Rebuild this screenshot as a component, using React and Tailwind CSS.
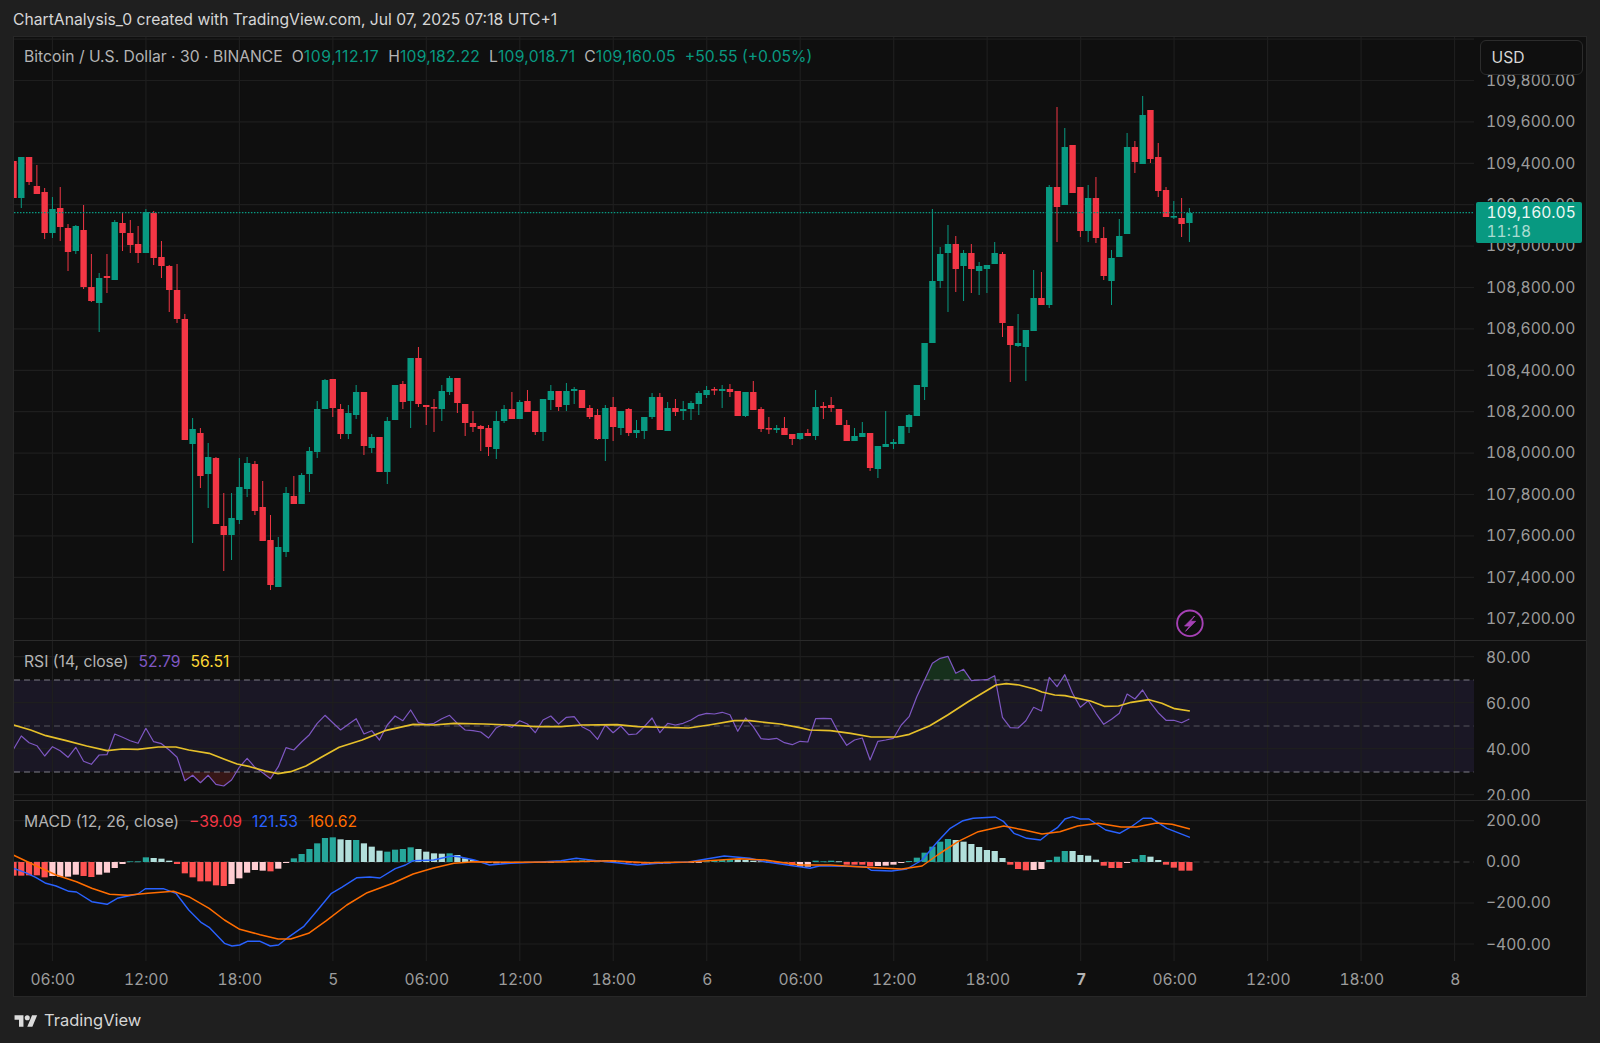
const UP = "#089981";
const DOWN = "#f23645";
const X = (i) => 13.5 + 7.79 * i;

// [up?, bodyTop, bodyBottom, wickTop, wickBottom]
const CANDLES = [
  [0,161,198,161,211],[1,157,198,157,208],[0,157,182,157,185],[0,186,194,165,194],[0,192,233,188,239],
  [1,209,233,197,238],[0,208,227,187,241],[0,228,252,224,271],[1,226,251,225,254],[0,230,287,205,289],
  [0,287,301,254,302],[1,278,303,273,332],[0,276,278,254,293],[1,222,280,220,280],[0,223,233,213,251],
  [0,233,245,220,253],[0,244,253,226,263],[1,212,253,209,253],[0,213,258,211,265],[0,257,266,241,278],
  [0,266,290,265,312],[0,290,319,264,323],[0,319,440,314,440],[1,429,444,418,543],[0,433,476,428,488],
  [1,457,474,443,508],[0,458,524,457,524],[0,526,535,493,571],[1,518,535,493,560],[1,487,520,458,524],
  [1,463,489,457,497],[0,464,511,461,515],[0,507,541,481,541],[0,540,585,515,590],[1,547,587,537,587],
  [1,493,552,487,557],[0,496,504,476,504],[1,475,504,473,504],[1,451,474,447,492],[1,409,452,401,458],
  [1,380,409,379,409],[0,379,408,379,417],[0,409,434,404,439],[1,413,434,405,439],[1,392,415,385,419],
  [0,392,446,392,455],[1,437,448,434,453],[0,437,472,437,472],[1,421,472,417,484],[1,385,420,385,420],
  [0,384,402,381,409],[1,358,401,358,428],[0,358,404,347,407],[0,405,407,405,425],[0,407,408,399,432],
  [1,391,409,385,421],[1,378,392,376,395],[0,378,403,378,413],[0,404,423,404,436],[0,423,427,411,432],
  [0,426,429,425,451],[0,428,447,425,456],[1,421,449,411,459],[1,409,421,405,423],[0,409,419,392,419],
  [1,402,419,400,419],[0,401,412,390,412],[0,411,432,411,435],[1,399,432,399,441],[1,391,400,385,410],
  [0,391,407,391,411],[1,391,405,383,411],[1,389,391,387,404],[0,390,408,390,408],[0,408,417,405,419],
  [0,415,439,409,440],[1,408,439,405,461],[0,407,427,397,441],[1,411,428,411,435],[0,409,433,408,436],
  [1,430,433,420,438],[1,417,431,417,439],[1,397,417,393,419],[0,397,430,393,430],[1,408,431,402,431],
  [0,408,412,399,416],[1,409,411,401,420],[1,403,409,401,420],[1,393,404,391,415],[1,390,395,386,398],
  [0,389,390,387,395],[1,389,391,385,408],[0,389,392,384,397],[0,391,416,391,416],[1,392,416,392,417],
  [0,392,410,381,410],[0,409,429,407,432],[0,428,429,417,434],[1,428,430,425,433],[0,428,435,417,435],
  [0,434,439,434,445],[1,433,439,433,440],[0,433,436,429,436],[1,407,436,390,440],[0,406,408,402,419],
  [0,405,408,397,412],[0,409,425,409,425],[0,425,441,420,441],[1,436,441,428,441],[1,433,437,422,437],
  [0,433,468,433,471],[1,446,469,446,478],[1,444,447,411,447],[1,442,444,439,449],[1,426,444,426,444],
  [1,415,427,414,433],[1,385,416,385,416],[1,343,387,343,400],[1,281,343,209,343],[1,254,281,247,288],
  [1,244,253,225,312],[0,244,269,236,292],[1,253,266,250,301],[0,253,269,244,293],[1,266,271,262,295],
  [1,265,269,265,293],[1,253,264,242,264],[0,254,323,252,337],[0,326,345,326,382],[1,343,346,314,347],
  [1,330,347,330,381],[1,298,331,270,331],[0,298,305,272,305],[1,187,305,185,308],[0,187,207,107,242],
  [1,147,205,128,205],[0,145,193,145,193],[0,187,231,187,237],[1,198,231,185,242],[0,198,238,177,243],
  [0,238,276,227,280],[1,258,281,250,305],[1,236,257,219,257],[1,147,234,133,234],[0,147,162,141,173],
  [1,115,164,96,164],[0,110,159,110,163],[0,157,191,143,197],[0,190,217,187,217],[1,216,217,201,219],
  [0,218,224,198,237],[1,213,223,208,242],
];

// RSI value as a y in the crop that was measured (630 + y / 3), one per bar
const RSI = [358,318,338,347,378,350,362,382,352,394,403,375,374,312,322,332,340,295,335,341,360,382,452,436,458,436,463,468,450,412,385,412,428,446,410,353,360,336,314,280,256,278,300,283,266,312,302,330,285,258,272,240,278,283,280,266,256,280,300,302,306,324,293,283,292,272,282,308,270,258,282,262,260,290,302,328,285,308,288,314,312,290,264,308,280,285,280,270,256,250,252,247,254,304,264,290,326,328,325,338,344,334,336,266,265,266,310,346,330,324,390,334,330,325,285,260,200,150,100,85,79,130,118,152,150,149,137,262,293,294,272,232,243,142,170,134,190,232,212,250,283,268,250,192,207,180,218,248,271,271,278,267];
const rsiPts = RSI.map((v, i) => [X(i), 630 + v / 3]);
const toStr = (pts) => pts.map((p) => `${p[0].toFixed(1)},${p[1].toFixed(1)}`).join(" ");

const left = (pairs, oy) => pairs.map(([x, y]) => [x / 1.96, oy + y / 3]);
const right = (pairs, oy) => pairs.map(([x, y]) => [800 + x / 1.96, oy + y / 3]);

const RSI_MA = [
  ...left([[26,285],[60,300],[90,317],[130,332],[170,348],[210,362],[240,357],[270,358],[310,351],[345,351],[370,360],[410,370],[440,388],[465,402],[490,410],[520,423],[545,431],[570,425],[600,408],[630,382],[665,352],[710,330],[755,302],[810,283],[850,285],[890,280],[950,282],[1000,285],[1050,290],[1100,290],[1140,285],[1210,284],[1250,290],[1350,294],[1390,285],[1440,272],[1470,272],[1530,282],[1568,293]], 630),
  ...right([[20,300],[60,302],[100,310],[140,321],[190,321],[215,313],[255,287],[290,255],[330,215],[385,165],[405,161],[430,165],[460,177],[475,186],[500,195],[520,197],[570,213],[597,229],[625,228],[650,217],[685,209],[710,220],[735,236],[765,243]], 630),
];

const MACD_LINE = [
  ...left([[26,205],[50,218],[70,232],[90,250],[110,258],[135,274],[150,276],[180,305],[210,313],[230,295],[270,282],[285,266],[320,266],[345,280],[370,330],[395,368],[410,382],[440,430],[455,438],[470,435],[485,424],[510,424],[530,438],[546,435],[565,412],[595,380],[620,335],[650,280],[670,262],[700,233],[725,231],[745,234],[775,206],[795,195],[810,182],[850,180],[885,168],[900,170],[930,180],[960,195],[1000,190],[1060,186],[1100,182],[1130,175],[1170,182],[1210,188],[1250,195],[1290,190],[1350,186],[1420,168],[1470,175],[1500,185],[1568,200]], 800),
  ...right([[20,205],[40,197],[130,200],[140,211],[180,213],[210,207],[240,180],[270,125],[295,85],[320,62],[340,55],[384,51],[400,65],[420,100],[445,115],[472,120],[490,98],[505,83],[520,57],[535,50],[550,57],[567,57],[600,90],[627,100],[650,80],[673,55],[690,55],[720,85],[765,112]], 800),
];
const SIGNAL = [
  ...left([[26,165],[60,190],[110,225],[150,245],[180,265],[215,283],[250,286],[290,280],[340,274],[370,290],[410,325],[440,360],[470,388],[510,404],[545,417],[570,417],[605,400],[640,362],[680,315],[720,278],[770,250],[810,222],[850,204],[890,190],[930,185],[1000,187],[1100,186],[1200,182],[1270,188],[1350,186],[1450,176],[1500,180],[1568,195]], 800),
  ...right([[60,195],[130,202],[200,207],[240,198],[270,165],[310,125],[350,95],[400,78],[440,90],[475,102],[510,95],[545,78],[585,70],[630,81],[660,81],[700,69],[730,73],[765,87]], 800),
];

const HIST = "227r 227r 226r 226r 232r 228p 230p 230p 224p 228r 231r 224p 218p 204p 192p 184t 184t 172t 174l 176l 182l 192r 220r 232r 244r 244r 256r 258r 252p 235p 218p 210p 212p 214r 206p 189p 175t 162t 147t 130t 114t 112t 118l 120l 120t 130l 140l 152l 155t 149t 147t 142t 147l 155l 160l 161l 160t 165l 175l 180l 184l 188p 190p 190p 189p 188p 188r 188p 187p 187p 184t 183t 182t 181t 181t 180t 180t 182l 184l 188r 190r 191r 192p 192p 190p 188p 188p 187p 186p 184t 182t 180t 178t 178l 180l 182l 184l 185l 188r 190r 195r 200p 200p 182t 184t 182t 184l 194r 194r 194r 199r 198p 197p 194p 189p 183t 173t 158t 140t 125t 117t 120l 125l 132l 141l 150l 153l 174l 194r 207r 211r 210p 207p 180t 170t 153t 153l 165l 167l 179l 197r 204r 204r 189p 177t 165t 170l 180l 194r 203r 212r 212r"
  .split(" ")
  .map((s) => [parseInt(s, 10), s.slice(-1)]);
const HIST_COLOR = { t: "#26a69a", l: "#b2dfdb", r: "#ff5252", p: "#ffcdd2" };

const GRID_X = Array.from({ length: 16 }, (_, i) => 52.5 + 93.5 * i);
const PRICE_LABELS = ["109,800.00","109,600.00","109,400.00","109,200.00","109,000.00","108,800.00","108,600.00","108,400.00","108,200.00","108,000.00","107,800.00","107,600.00","107,400.00","107,200.00"];
const PRICE_GRID = [39.1, ...PRICE_LABELS.map((_, i) => 80.5 + 41.4 * i)];
const TIME_LABELS = ["06:00","12:00","18:00","5","06:00","12:00","18:00","6","06:00","12:00","18:00","7","06:00","12:00","18:00","8"];
const GRID = "#1e1e1e";

function Grid({ top, bottom, ys }) {
  return (
    <g stroke={GRID} strokeWidth="1.2">
      {GRID_X.map((x) => <line key={x} x1={x} x2={x} y1={top} y2={bottom} />)}
      {ys.map((y) => <line key={y} x1="14" x2="1475" y1={y} y2={y} />)}
    </g>
  );
}

function Candles() {
  return CANDLES.map(([up, bt, bb, wt, wb], i) => {
    const c = up ? UP : DOWN;
    const x = X(i);
    return (
      <g key={i} fill={c}>
        <rect x={x - 0.5} y={wt} width="1" height={wb - wt} />
        <rect x={x - 3.2} y={bt} width="6.4" height={Math.max(bb - bt, 1.6)} />
      </g>
    );
  });
}

function PriceChart() {
  return (
    <svg className="block w-full h-full" viewBox="14 37 1460.5 603" preserveAspectRatio="none">
      <Grid top={37} bottom={640} ys={PRICE_GRID} />
      <Candles />
      <line x1="14" x2="1475" y1="212.7" y2="212.7" stroke={UP} strokeWidth="1.2" strokeDasharray="1.5 1.5" />
      <circle cx="1190.3" cy="623.3" r="12.8" fill="#0f0f0f" stroke="#a641b5" strokeWidth="1.9" />
      <path d="M1195 616 L1185 626 L1190 626 L1186 631.3 L1196 621.3 L1191 621.3 Z" fill="#a641b5" stroke="#a641b5" strokeWidth="0.8" strokeLinejoin="round" />
    </svg>
  );
}

function RsiChart() {
  const d = `M${rsiPts[0][0]},680 L${toStr(rsiPts).replace(/ /g, " L")} L${rsiPts[rsiPts.length - 1][0]},680 Z`;
  const d2 = d.replace(/,680/g, ",772");
  return (
    <svg className="block w-full h-full" viewBox="14 641 1460.5 159" preserveAspectRatio="none">
      <defs>
        <clipPath id="rsiOver"><rect x="14" y="641" width="1461" height="39" /></clipPath>
        <clipPath id="rsiUnder"><rect x="14" y="772" width="1461" height="28" /></clipPath>
      </defs>
      <rect x="14" y="680" width="1461" height="92" fill="#1a1725" />
      <Grid top={641} bottom={800} ys={[656.7, 702.7, 748.7, 794.7]} />
      <path d={d} fill="#16301c" clipPath="url(#rsiOver)" />
      <path d={d2} fill="#361616" clipPath="url(#rsiUnder)" />
      <g strokeDasharray="6 4" strokeWidth="1">
        <line x1="14" x2="1475" y1="680" y2="680" stroke="#80808a" />
        <line x1="14" x2="1475" y1="726" y2="726" stroke="#55555c" />
        <line x1="14" x2="1475" y1="772" y2="772" stroke="#80808a" />
      </g>
      <polyline points={toStr(rsiPts)} fill="none" stroke="#7e57c2" strokeWidth="1.2" strokeLinejoin="round" />
      <polyline points={toStr(RSI_MA)} fill="none" stroke="#e6c02a" strokeWidth="1.7" strokeLinejoin="round" />
    </svg>
  );
}

function MacdChart() {
  return (
    <svg className="block w-full h-full" viewBox="14 801 1460.5 160" preserveAspectRatio="none">
      <Grid top={801} bottom={961} ys={[820.7, 903, 944]} />
      <line x1="14" x2="1475" y1="862" y2="862" stroke="#444" strokeWidth="1" strokeDasharray="6 4" />
      {HIST.map(([v, c], i) => {
        const y = 800 + v / 3;
        const top = Math.min(y, 862);
        return <rect key={i} x={X(i) - 3.1} y={top} width="6.2" height={Math.max(Math.abs(y - 862), 0.8)} fill={HIST_COLOR[c]} />;
      })}
      <polyline points={toStr(MACD_LINE)} fill="none" stroke="#2962ff" strokeWidth="1.4" strokeLinejoin="round" />
      <polyline points={toStr(SIGNAL)} fill="none" stroke="#ff6d00" strokeWidth="1.5" strokeLinejoin="round" />
    </svg>
  );
}

function AxisLabels({ labels, row, offset }) {
  return (
    <div className="w-[112px] h-full overflow-hidden shrink-0">
      <div style={{ marginTop: offset }}>
        {labels.map((l, i) => (
          <div key={i} style={{ height: row }} className="flex items-center pl-[12px] text-[15.6px] text-[#9c9c9c] tabular-nums">{l}</div>
        ))}
      </div>
    </div>
  );
}

function Pair({ k, v, cls }) {
  return (
    <span className="flex">
      <span className="text-[#b4b4b4]">{k}</span>
      <span className={cls}>{v}</span>
    </span>
  );
}

export default function App() {
  return (
    <div className="w-[1600px] h-[1043px] bg-[#1f1f1f] flex flex-col overflow-hidden text-[15.7px] leading-none font-['Inter','Liberation_Sans',sans-serif]">
      <div className="h-9 shrink-0 flex items-center pl-[13px] pt-[4px] text-[#d6d6d6]">
        ChartAnalysis_0 created with TradingView.com, Jul 07, 2025 07:18 UTC+1
      </div>

      <div className="relative mx-[13px] h-[961px] shrink-0 bg-[#0f0f0f] border border-[#272727] flex flex-col">
        <div className="flex h-[603px] shrink-0">
          <div className="relative flex-1 min-w-0">
            <PriceChart />
            <div className="absolute left-[10px] top-[12px] flex items-center gap-[9px] text-[#b4b4b4]">
              <span>Bitcoin / U.S. Dollar · 30 · BINANCE</span>
              <Pair k="O" v="109,112.17" cls="text-[#089981] tracking-[0.6px]" />
              <Pair k="H" v="109,182.22" cls="text-[#089981] tracking-[0.2px]" />
              <Pair k="L" v="109,018.71" cls="text-[#089981] tracking-[0.25px]" />
              <Pair k="C" v="109,160.05" cls="text-[#089981] tracking-[0.2px]" />
              <span className="text-[#089981]">+50.55 (+0.05%)</span>
            </div>
          </div>
          <AxisLabels labels={PRICE_LABELS} row={41.4} offset={23} />
          <div className="absolute left-[1465.5px] top-[3px] w-[103px] h-[35px] rounded-[6px] border border-[#2c2c2c] bg-[#0f0f0f] flex items-center pl-[11px] text-[#d6d6d6]">
            USD
          </div>
          <div className="absolute left-[1461.5px] top-[165px] w-[106px] h-[41px] rounded-[2px] bg-[#089981] flex flex-col justify-center gap-[3px] pl-[11px] text-[15.6px] tabular-nums">
            <span className="text-[#ecf7f5]">109,160.05</span>
            <span className="text-[#a9dcd2]">11:18</span>
          </div>
        </div>

        <div className="flex h-[160px] shrink-0 border-t border-[#2a2a2a]">
          <div className="relative flex-1 min-w-0">
            <RsiChart />
            <div className="absolute left-[10px] top-[13px] flex gap-[10px]">
              <span className="text-[#b4b4b4]">RSI (14, close)</span>
              <span className="text-[#7e57c2]">52.79</span>
              <span className="text-[#fdd835]">56.51</span>
            </div>
          </div>
          <AxisLabels labels={["80.00", "60.00", "40.00", "20.00"]} row={46} offset={-6} />
        </div>

        <div className="flex h-[161px] shrink-0 border-t border-[#2a2a2a]">
          <div className="relative flex-1 min-w-0">
            <MacdChart />
            <div className="absolute left-[10px] top-[13px] flex gap-[10px]">
              <span className="text-[#b4b4b4]">MACD (12, 26, close)</span>
              <span className="text-[#f23645]">−39.09</span>
              <span className="text-[#2962ff]">121.53</span>
              <span className="text-[#ff6d00]">160.62</span>
            </div>
          </div>
          <AxisLabels labels={["200.00", "0.00", "−200.00", "−400.00"]} row={41.3} offset={-1} />
        </div>

        <div className="flex-1 min-h-0 flex items-center -ml-[8px] pt-[3px] text-[15.6px] text-[#9c9c9c] tabular-nums">
          {TIME_LABELS.map((t, i) => (
            <span key={i} className={t === "7" ? "w-[93.5px] text-center font-bold text-[#b4b4b4]" : "w-[93.5px] text-center"}>{t}</span>
          ))}
        </div>
      </div>

      <div className="flex-1 flex items-center gap-[5px] pl-[13px] pt-[1px] text-[#d6d6d6] text-[16.5px]">
        <svg width="26" height="14" viewBox="0 2 36 22" fill="#dcdcdc" aria-hidden="true">
          <path d="M14 22H7V11H0V4h14v18zM28 22h-8l7.5-18h8L28 22z" />
          <circle cx="20" cy="8" r="4" />
        </svg>
        <span>TradingView</span>
      </div>
    </div>
  );
}
